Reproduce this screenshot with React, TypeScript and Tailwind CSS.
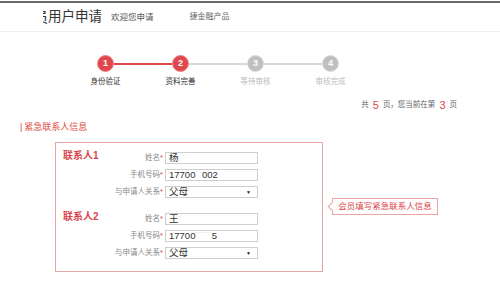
import React from 'react';

const steps = [
  { n: 1, label: '身份验证', done: true },
  { n: 2, label: '资料完善', done: true },
  { n: 3, label: '等待审核', done: false },
  { n: 4, label: '审核完成', done: false },
];

const contacts = [
  { title: '联系人1', name: ['杨', '˙ ˊ'], phone: ['17700', '˙  ˊ', '002'], rel: '父母' },
  { title: '联系人2', name: ['王', 'ˊ'], phone: ['17700', '˙˙˙˙˙˙˙', '5'], rel: '父母' },
];

function Field({ label, children }: { label: string; children: React.ReactNode }) {
  return (
    <div className="flex items-center h-[12px]">
      <span className="flex-1 text-right pr-[2px] text-[7.5px] leading-[12px] text-[#888]">
        {label}<span className="text-[#e0474c]">*</span>
      </span>
      <div className="w-[93px] h-[12px] border border-[#cfcfcf] bg-white flex items-center pl-[3px] pr-[6px] text-[9.5px] leading-[10px] text-[#333]">
        {children}
      </div>
    </div>
  );
}

export default function App() {
  return (
    <div className="w-[500px] h-[302px] bg-white overflow-hidden flex flex-col font-['Liberation_Sans','Noto_Sans_CJK_SC',sans-serif]">
      <div className="mt-px h-[2px] bg-[#6a6a6a]" />

      {/* header */}
      <div className="h-[29px] flex items-center border-b border-[#eeeeee] pl-[43px]">
        <span className="w-[5px] overflow-hidden flex justify-end text-[14px] text-[#333]">
          <span className="shrink-0">员</span>
        </span>
        <span className="text-[13.5px] text-[#333]">用户申请</span>
        <span className="ml-[9px] text-[8.5px] text-[#555]">欢迎您申请</span>
        <span className="ml-[36px] text-[8px] text-[#666]">捷金融产品</span>
      </div>

      {/* steps */}
      <div className="mt-[23px] ml-[97px] flex items-center h-[17px]">
        {steps.map((s, i) => (
          <React.Fragment key={s.n}>
            <div className={`w-[17px] h-[17px] rounded-full flex items-center justify-center border-[1.5px] text-[9px] font-bold text-white ${s.done ? 'bg-[#e0474c] border-[#f0898c]' : 'bg-[#bfbfbf] border-[#dddddd]'}`}>
              {s.n}
            </div>
            {i < steps.length - 1 && (
              <div className={`w-[58px] h-[2px] ${steps[i + 1].done ? 'bg-[#e0474c]' : 'bg-[#d8d8d8]'}`} />
            )}
          </React.Fragment>
        ))}
      </div>
      <div className="mt-[4px] ml-[68px] grid grid-cols-[75px_75px_75px_75px] h-[11px]">
        {steps.map(s => (
          <span key={s.n} className={`text-center text-[7.5px] leading-[11px] ${s.done ? 'text-[#333]' : 'text-[#bbb]'}`}>{s.label}</span>
        ))}
      </div>

      {/* page count */}
      <div className="mt-[12px] h-[12px] flex items-center justify-end pr-[43px] text-[7.5px] text-[#666]">
        <span>共</span>
        <span className="mx-[4px] text-[11px] text-[#e0474c]">5</span>
        <span>页，您当前在第</span>
        <span className="mx-[4px] text-[11px] text-[#e0474c]">3</span>
        <span>页</span>
      </div>

      {/* section title */}
      <div className="mt-[11px] h-[12px] pl-[20px] flex items-center text-[9px] text-[#dd4a44]">
        <span className="mr-[2px]">|</span>紧急联系人信息
      </div>

      <div className="mt-[8px] flex items-start">
        <div className="ml-[55px] w-[268px] h-[130px] border border-[#e7a6a6] pt-[9px] pl-[7px] pr-[64px] flex flex-col gap-[15px]">
          {contacts.map(c => (
            <div key={c.title} className="flex">
              <div className="w-[42px] shrink-0 text-[10px] leading-[12px] font-bold text-[#d9464a] -mt-[2px]">{c.title}</div>
              <div className="flex-1 flex flex-col gap-[5px]">
                <Field label="姓名">
                  {c.name[0]}<span className="text-[#bbb] text-[7px]">{c.name[1]}</span>
                </Field>
                <Field label="手机号码">
                  {c.phone[0]}<span className="text-[#bbb] text-[7px]">{c.phone[1]}</span>{c.phone[2]}
                </Field>
                <Field label="与申请人关系">
                  <span className="flex-1">{c.rel}</span>
                  <span className="text-[5px] text-[#222]">▼</span>
                </Field>
              </div>
            </div>
          ))}
        </div>

        {/* tooltip */}
        <div className="relative ml-[9px] mt-[56px] w-[106px] h-[17px] border border-[#e7a6a6] bg-[#fffdfd] flex items-center justify-center text-[8.5px] text-[#d9464a]">
          <div className="absolute -left-[4px] top-[4px] w-[7px] h-[7px] rotate-45 border-l border-b border-[#e7a6a6] bg-[#fffdfd]" />
          <span className="relative">会员填写紧急联系人信息</span>
        </div>
      </div>
    </div>
  );
}
